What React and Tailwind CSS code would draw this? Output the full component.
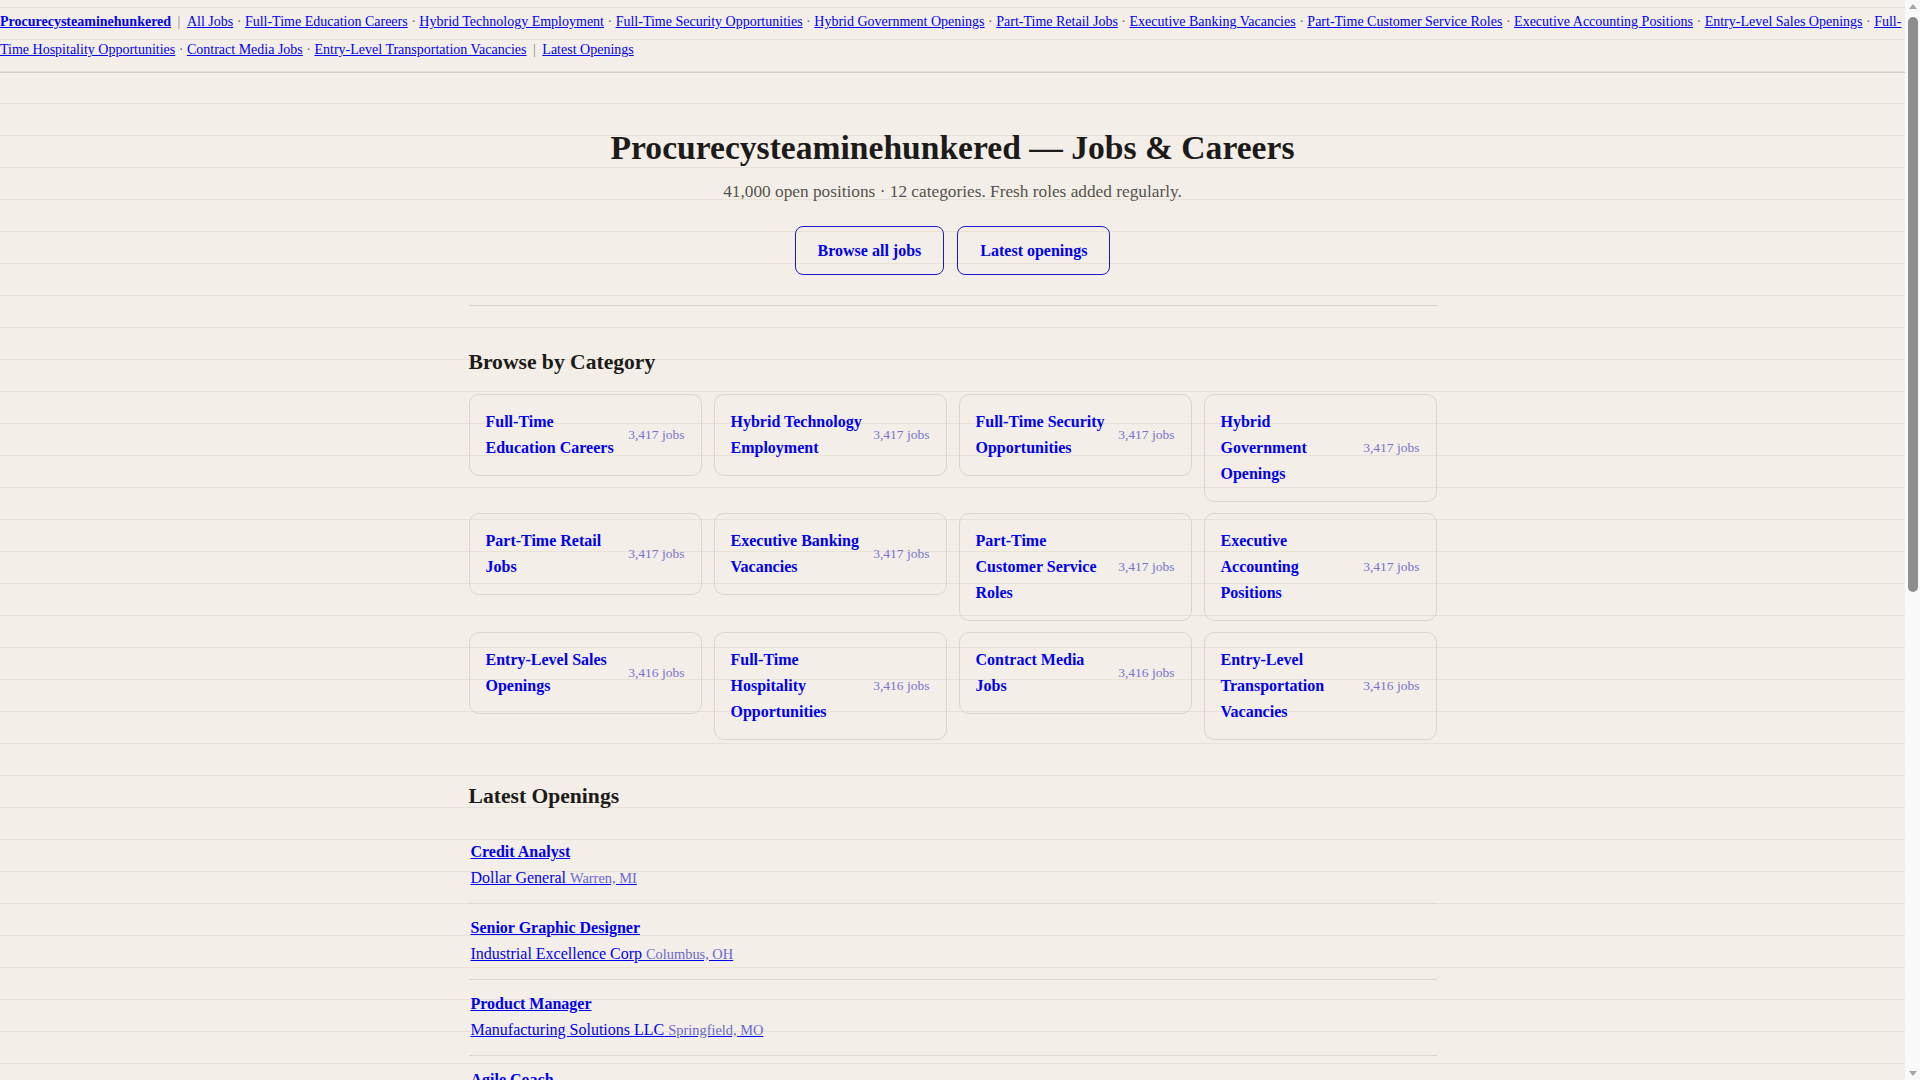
import React from 'react';

const navLinks = [
  'Full-Time Education Careers',
  'Hybrid Technology Employment',
  'Full-Time Security Opportunities',
  'Hybrid Government Openings',
  'Part-Time Retail Jobs',
  'Executive Banking Vacancies',
  'Part-Time Customer Service Roles',
  'Executive Accounting Positions',
  'Entry-Level Sales Openings',
  'Full-Time Hospitality Opportunities',
  'Contract Media Jobs',
  'Entry-Level Transportation Vacancies',
];

const categories = [
  { name: 'Full-Time Education Careers', count: '3,417' },
  { name: 'Hybrid Technology Employment', count: '3,417' },
  { name: 'Full-Time Security Opportunities', count: '3,417' },
  { name: 'Hybrid Government Openings', count: '3,417' },
  { name: 'Part-Time Retail Jobs', count: '3,417' },
  { name: 'Executive Banking Vacancies', count: '3,417' },
  { name: 'Part-Time Customer Service Roles', count: '3,417' },
  { name: 'Executive Accounting Positions', count: '3,417' },
  { name: 'Entry-Level Sales Openings', count: '3,416' },
  { name: 'Full-Time Hospitality Opportunities', count: '3,416' },
  { name: 'Contract Media Jobs', count: '3,416' },
  { name: 'Entry-Level Transportation Vacancies', count: '3,416' },
];

const jobs = [
  { title: 'Credit Analyst', company: 'Dollar General', place: 'Warren, MI' },
  { title: 'Senior Graphic Designer', company: 'Industrial Excellence Corp', place: 'Columbus, OH' },
  { title: 'Product Manager', company: 'Manufacturing Solutions LLC', place: 'Springfield, MO' },
  { title: 'Agile Coach', company: 'Summit Health Partners', place: 'Austin, TX' },
  { title: 'Registered Nurse', company: 'Riverside Medical Group', place: 'Tampa, FL' },
  { title: 'Warehouse Associate', company: 'Northline Logistics', place: 'Reno, NV' },
  { title: 'Customer Service Representative', company: 'Bluewater Financial', place: 'Charlotte, NC' },
  { title: 'Software Engineer', company: 'Cedar Peak Technologies', place: 'Denver, CO' },
  { title: 'Retail Sales Associate', company: 'Harbor Home Goods', place: 'Portland, OR' },
  { title: 'Security Officer', company: 'Keystone Protective Services', place: 'Pittsburgh, PA' },
];

// fake browser scrollbar, the reference shows one on the right edge
function Scrollbar() {
  return (
    <div aria-hidden="true" className="fixed top-0 right-0 z-10 h-screen w-[15px] bg-[#f9f9f9]">
      <div className="mx-auto mt-[4px] h-0 w-0 border-x-[4px] border-b-[5px] border-x-transparent border-b-[#a3a3a3]" />
      <div className="mx-auto mt-[8px] h-[575px] w-[10px] rounded-full bg-[#8e8e8e]" />
      <div className="absolute bottom-[4px] left-[3.5px] h-0 w-0 border-x-[4px] border-t-[5px] border-x-transparent border-t-[#a3a3a3]" />
    </div>
  );
}

export default function App() {
  return (
    <div
      className="min-h-screen bg-[#f3efe8] bg-[linear-gradient(to_bottom,transparent_7px,#e7e1d6_7px,#e7e1d6_8px,transparent_8px)] bg-[length:100%_32px] pr-[15px] text-[#1c1b19]"
      style={{ fontFamily: '"Liberation Serif", "Times New Roman", serif' }}
    >
      <Scrollbar />

      {/* top nav */}
      <nav className="border-b border-[#d6d0c4] py-2 text-[14px] leading-[28px]">
        <a href="#" className="font-bold text-[#0000ee] underline">Procurecysteaminehunkered</a>
        <span className="mx-[6.5px] text-[#8a8578]">|</span>
        <a href="#" className="text-[#0000ee] underline">All Jobs</a>
        {navLinks.map((l) => (
          <React.Fragment key={l}>
            <span className="mx-[3.5px] text-[#6b675f]">·</span>
            <a href="#" className="text-[#0000ee] underline">{l}</a>
          </React.Fragment>
        ))}
        <span className="mx-[6.5px] text-[#8a8578]">|</span>
        <a href="#" className="text-[#0000ee] underline">Latest Openings</a>
      </nav>

      <main className="mx-auto max-w-[968px]">
        {/* hero */}
        <section className="border-b border-[#d9d3c7] pt-[56px] pb-[30px] text-center">
          <h1 className="text-[33.6px] font-bold leading-[38px]">Procurecysteaminehunkered — Jobs &amp; Careers</h1>
          <p className="mt-[13px] text-[17.3px] leading-[24px] text-[#55524c]">
            41,000 open positions · 12 categories. Fresh roles added regularly.
          </p>
          <div className="mt-[22px] flex justify-center gap-[13px]">
            <a href="#" className="rounded-lg border border-[#1a1acc] px-[22px] py-[12px] text-[16px] font-bold leading-[23px] text-[#0000ee]">
              Browse all jobs
            </a>
            <a href="#" className="rounded-lg border border-[#1a1acc] px-[22px] py-[12px] text-[16px] font-bold leading-[23px] text-[#0000ee]">
              Latest openings
            </a>
          </div>
        </section>

        {/* categories */}
        <section className="pt-[42px]">
          <h2 className="mb-[18px] text-[21.6px] font-bold leading-[28px]">Browse by Category</h2>
          <div className="grid grid-cols-4 items-start gap-x-[12px] gap-y-[11px]">
            {categories.map((c) => (
              <a
                key={c.name}
                href="#"
                className="flex items-center justify-between gap-[10px] rounded-[10px] border border-[#dcd5c9] px-[16px] py-[14px]"
              >
                <span className="text-[16px] font-bold leading-[26px] text-[#0000ee]">{c.name}</span>
                <span className="shrink-0 whitespace-nowrap text-[13.5px] text-[#7773cc]">{c.count} jobs</span>
              </a>
            ))}
          </div>
        </section>

        {/* latest */}
        <section className="pt-[42px] pb-[60px]">
          <h2 className="mb-[18px] text-[21.6px] font-bold leading-[28px]">Latest Openings</h2>
          <ul>
            {jobs.map((j) => (
              <li key={j.title} className="border-b border-[#ddd7cb] px-[2px] pt-[11px] pb-[12px]">
                <a href="#" className="block w-fit text-[16px] font-bold leading-[26px] text-[#0000ee] underline">
                  {j.title}
                </a>
                <a href="#" className="block w-fit text-[16px] leading-[26px] text-[#0000ee] underline">
                  {j.company} <span className="text-[14.4px] text-[#6b68cc]">{j.place}</span>
                </a>
              </li>
            ))}
          </ul>
        </section>
      </main>
    </div>
  );
}
